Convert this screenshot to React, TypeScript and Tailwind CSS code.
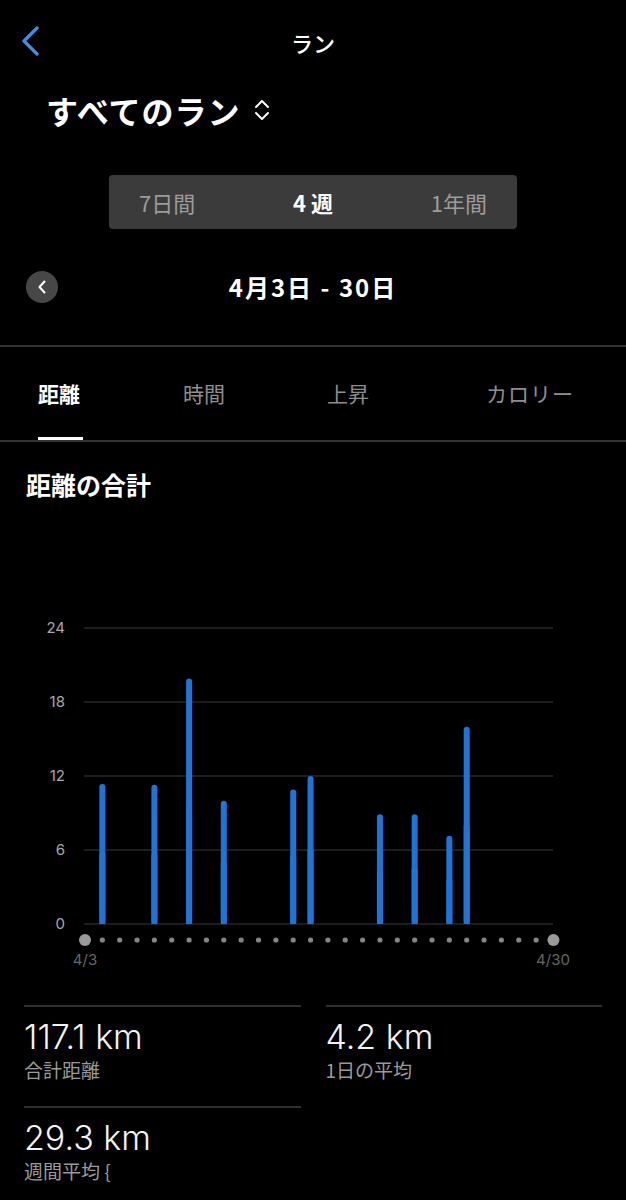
const jp = "font-['Noto_Sans_CJK_JP',sans-serif]";

const bars = [
  { i: 1, v: 11.35 },
  { i: 4, v: 11.3 },
  { i: 6, v: 19.9 },
  { i: 8, v: 10.0 },
  { i: 12, v: 10.9 },
  { i: 13, v: 12.0 },
  { i: 17, v: 8.9 },
  { i: 19, v: 8.9 },
  { i: 21, v: 7.15 },
  { i: 22, v: 16.0 },
];

const X0 = 85;
const STEP = 17.35;
const BASE = 324;
const PER = 296 / 24;

function DistanceChart() {
  const ticks = [0, 6, 12, 18, 24];
  return (
    <svg width="626" height="380" viewBox="0 0 626 380" className="block">
      {ticks.map((t) => {
        const y = BASE - t * PER;
        return (
          <g key={t}>
            <line x1="84" x2="553" y1={y} y2={y} stroke="#3a3a3a" strokeWidth="1.2" />
            <text
              x="65"
              y={y + 5}
              textAnchor="end"
              fontSize="15"
              fill="#a8a8a8"
              fontFamily="Inter, sans-serif"
            >
              {t}
            </text>
          </g>
        );
      })}
      {bars.map((b) => {
        const x = X0 + b.i * STEP;
        const h = b.v * PER;
        return (
          <g key={b.i} fill="#1f74d8">
            <rect x={x - 3} y={BASE - h} width="6" height={h} rx="3" />
            <rect x={x - 3} y={BASE - h / 2} width="6" height={h / 2} />
          </g>
        );
      })}
      {Array.from({ length: 28 }).map((_, i) => {
        const end = i === 0 || i === 27;
        return (
          <circle
            key={i}
            cx={X0 + i * STEP}
            cy="340"
            r={end ? 6 : 2.6}
            fill={end ? "#9a9a9a" : "#858585"}
          />
        );
      })}
      <text x="85" y="365" textAnchor="middle" fontSize="15" fill="#666" fontFamily="Inter, sans-serif">
        4/3
      </text>
      <text x="553" y="365" textAnchor="middle" fontSize="15" fill="#666" fontFamily="Inter, sans-serif">
        4/30
      </text>
    </svg>
  );
}

function Stat({ value, label }: { value: string; label: string }) {
  return (
    <div className="h-[101px] border-t-2 border-[#2e2e2e]">
      <div className="pt-[12px] text-[34px] leading-[36px] text-[#f2f2f2] font-['Inter','Noto_Sans_CJK_JP',sans-serif] font-light">
        {value}
      </div>
      <div className={`mt-[3px] text-[19px] leading-[24px] text-[#9a9a9a] ${jp}`}>{label}</div>
    </div>
  );
}

export default function App() {
  return (
    <div className={`w-full min-h-[1200px] bg-black text-white ${jp}`}>
      {/* nav */}
      <div className="relative h-[84px] flex items-center justify-center">
        <svg className="absolute left-[20px] top-[26px]" width="20" height="30" viewBox="0 0 20 30">
          <path d="M17 2 L4 15 L17 28" fill="none" stroke="#3e8ee6" strokeWidth="3.2" strokeLinecap="round" strokeLinejoin="round" />
        </svg>
        <span className="text-[22px] font-medium">ラン</span>
      </div>

      {/* title */}
      <div className="h-[52px] pl-[46px] flex items-center gap-[14px]">
        <span className="text-[32px] font-bold tracking-[1px]">すべてのラン</span>
        <svg width="16" height="22" viewBox="0 0 16 22">
          <path d="M2 8 L8 2 L14 8 M2 14 L8 20 L14 14" fill="none" stroke="#fff" strokeWidth="2" strokeLinecap="round" strokeLinejoin="round" />
        </svg>
      </div>

      {/* range segment */}
      <div className="mt-[39px] ml-[109px] w-[408px] h-[54px] rounded-[4px] bg-[#3b3b3b] px-[30px] flex items-center justify-between text-[22px]">
        <span className="text-[#9c9c9c]">7日間</span>
        <span className="font-bold text-white">4 週</span>
        <span className="text-[#9c9c9c]">1年間</span>
      </div>

      {/* date */}
      <div className="relative mt-[26px] h-[64px] flex items-center justify-center">
        <div className="absolute left-[26px] top-[16px] w-[32px] h-[32px] rounded-full bg-[#474747] flex items-center justify-center">
          <svg width="10" height="14" viewBox="0 0 10 14">
            <path d="M7.5 1.5 L2.5 7 L7.5 12.5" fill="none" stroke="#fff" strokeWidth="2" strokeLinecap="round" strokeLinejoin="round" />
          </svg>
        </div>
        <span className="text-[24px] font-bold tracking-[2px]">4月3日 - 30日</span>
      </div>

      <div className="mt-[26px] h-[2px] bg-[#333]" />

      {/* tabs */}
      <div className="relative h-[93px] flex items-center text-[21px]">
        <span className="absolute left-[38px] font-bold text-white">距離</span>
        <span className="absolute left-[183px] text-[#8e8e8e]">時間</span>
        <span className="absolute left-[327px] text-[#8e8e8e]">上昇</span>
        <span className="absolute left-[486px] text-[#8e8e8e] tracking-[1px]">カロリー</span>
        <div className="absolute left-[38px] bottom-0 w-[45px] h-[3px] bg-white" />
      </div>
      <div className="h-[2px] bg-[#333]" />

      <div className="mt-[23px] h-[40px] pl-[26px] flex items-center text-[25px] font-bold">距離の合計</div>

      <div className="mt-[95px]">
        <DistanceChart />
      </div>

      <div className="mt-[25px] px-[24px] grid grid-cols-2 gap-x-[25px]">
        <Stat value="117.1 km" label="合計距離" />
        <Stat value="4.2 km" label="1日の平均" />
        <Stat value="29.3 km" label="週間平均 {" />
      </div>
    </div>
  );
}
